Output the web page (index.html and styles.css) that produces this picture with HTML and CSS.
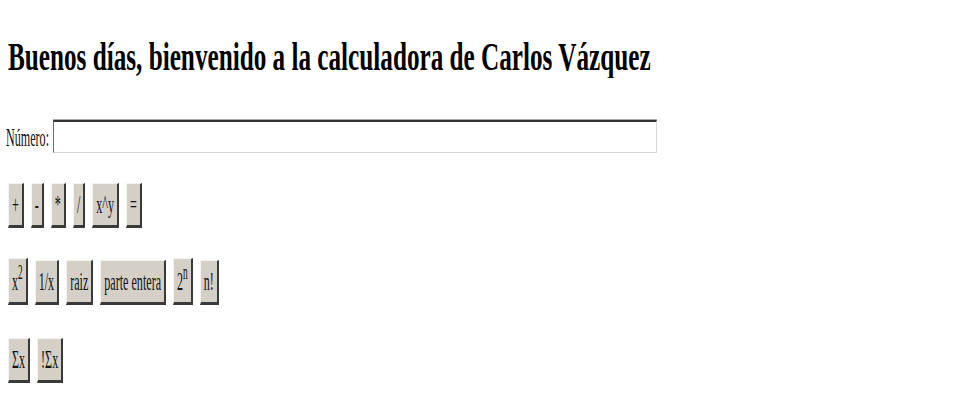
FILE: index.html
```html
<!DOCTYPE html>
<html lang="es">
<head>
<meta charset="utf-8">
<title>Calculadora</title>
<link rel="stylesheet" href="styles.css">
</head>
<body>
<div class="page">
  <h1 class="title">Buenos días, bienvenido a la calculadora de Carlos Vázquez</h1>
  <div class="field">
    <label class="label" for="num">Número:</label>
    <input class="input" id="num" type="text">
  </div>
  <div class="row">
    <button class="btn"><span class="t">+</span></button>
    <button class="btn"><span class="t">-</span></button>
    <button class="btn"><span class="t">*</span></button>
    <button class="btn"><span class="t">/</span></button>
    <button class="btn"><span class="t">x^y</span></button>
    <button class="btn"><span class="t">=</span></button>
  </div>
  <div class="row row-mid">
    <button class="btn btn-tall"><span class="t">x<sup>2</sup></span></button>
    <button class="btn"><span class="t">1/x</span></button>
    <button class="btn"><span class="t">raiz</span></button>
    <button class="btn"><span class="t">parte entera</span></button>
    <button class="btn btn-tall"><span class="t">2<sup>n</sup></span></button>
    <button class="btn"><span class="t">n!</span></button>
  </div>
  <div class="row row-last">
    <button class="btn"><span class="t">Σx</span></button>
    <button class="btn"><span class="t">!Σx</span></button>
  </div>
</div>
</body>
</html>
```

FILE: styles.css
```css
html, body {
  margin: 0;
  padding: 0;
  background: #ffffff;
}

.page {
  padding: 33px 0 0 8px;
  font-family: "Liberation Serif", "Times New Roman", serif;
  color: #000;
}

.title {
  width: max-content;
  margin: 0;
  font-size: 25.2px;
  line-height: 29px;
  font-weight: bold;
  white-space: nowrap;
  transform: scaleY(1.587);
  transform-origin: 0 0;
}

.field {
  display: flex;
  align-items: center;
  height: 33px;
  margin-top: 58px;
}

.label {
  display: inline-block;
  font-size: 12.1px;
  line-height: 14px;
  margin-left: -2px;
  margin-right: 4px;
  color: #111;
  transform: scaleY(2.15);
}

.input {
  width: 604px;
  height: 33px;
  box-sizing: border-box;
  margin: 0;
  padding: 0 2px;
  background: #fff;
  border-style: solid;
  border-width: 2px 1px 1px 1px;
  border-color: #333 #d6d6d6 #d6d6d6 #6a6a6a;
  box-shadow: 0 -1px 0 #a8a8a8;
  outline: none;
}

.row {
  display: flex;
  align-items: flex-end;
  gap: 7px;
  margin-top: 30px;
}

.row-last {
  margin-top: 33px;
}

.btn {
  display: inline-flex;
  align-items: flex-end;
  justify-content: center;
  box-sizing: border-box;
  height: 45px;
  margin: 0;
  padding: 0 3px 6px 3px;
  font-family: "Liberation Serif", "Times New Roman", serif;
  color: #111;
  background: #d4d0c8;
  border-style: solid;
  border-width: 1px 2px 3px 1px;
  border-color: #f4f4f4 #3a3a3a #3a3a3a #f4f4f4;
  border-radius: 0;
}

.btn-tall {
  height: 47px;
}

.t {
  display: block;
  font-size: 12.1px;
  line-height: 14px;
  white-space: nowrap;
  transform: scaleY(2.15);
  transform-origin: 50% 100%;
}

.t sup {
  font-size: 9.3px;
  line-height: 0;
  vertical-align: 5.1px;
}
```
